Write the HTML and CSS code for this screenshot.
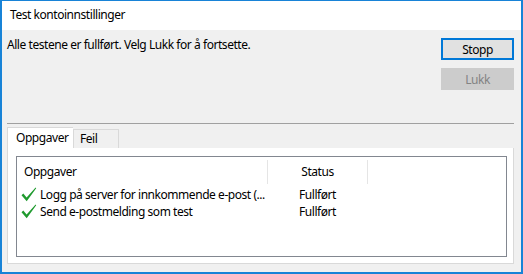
FILE: index.html
```html
<!DOCTYPE html>
<html>
<head>
    <title>Test kontoinnstillinger</title>
    <link rel="stylesheet" href="styles.css">
</head>
<body>
    <div class="window">
        <div class="titlebar">Test kontoinnstillinger</div>

        <div class="content">
            <div class="top-row">
                <div class="message">Alle testene er fullført. Velg Lukk for å fortsette.</div>
                <div class="buttons">
                    <button class="btn btn-default">Stopp</button>
                    <button class="btn btn-disabled" disabled>Lukk</button>
                </div>
            </div>

            <div class="separator"></div>

            <div class="tabs">
                <div class="tab active">Oppgaver</div>
                <div class="tab">Feil</div>
            </div>

            <div class="tab-panel">
                <div class="list">
                    <div class="list-header">
                        <div class="col-task">Oppgaver</div>
                        <div class="col-status">Status</div>
                        <div class="col-rest"></div>
                    </div>
                    <div class="list-row">
                        <div class="col-task">
                            <svg class="check" width="16" height="15" viewBox="0 0 16 15">
                                <path d="M0.5 8.2 L2.3 6.6 L5.6 10.4 L14.6 0.6 L15.2 1.3 L5.7 14.2 Z" fill="#1f9a2e"/>
                            </svg>
                            Logg på server for innkommende e-post (...
                        </div>
                        <div class="col-status">Fullført</div>
                    </div>
                    <div class="list-row">
                        <div class="col-task">
                            <svg class="check" width="16" height="15" viewBox="0 0 16 15">
                                <path d="M0.5 8.2 L2.3 6.6 L5.6 10.4 L14.6 0.6 L15.2 1.3 L5.7 14.2 Z" fill="#1f9a2e"/>
                            </svg>
                            Send e-postmelding som test
                        </div>
                        <div class="col-status">Fullført</div>
                    </div>
                </div>
            </div>
        </div>
    </div>
</body>
</html>
```

FILE: styles.css
```css
html, body {
    margin: 0;
    padding: 0;
}
body {
    font-family: "Noto Sans", "DejaVu Sans", sans-serif;
    font-size: 12px;
    letter-spacing: -0.45px;
    color: #000;
    background: #f0f0f0;
}
.window {
    width: 519px;
    height: 271px;
    border-top: 1px solid #1883d7;
    border-left: 2px solid #1883d7;
    border-right: 2px solid #1883d7;
    border-bottom: 2px solid #1883d7;
    background: #f0f0f0;
    display: flex;
    flex-direction: column;
}
.titlebar {
    height: 29px;
    background: #fff;
    line-height: 28px;
    padding-left: 8px;
}
.content {
    flex: 1;
    padding: 0 7px 0 5px;
    display: flex;
    flex-direction: column;
}
.top-row {
    display: flex;
    justify-content: space-between;
    height: 93px;
}
.message {
    padding-top: 7px;
    line-height: 16px;
}
.buttons {
    display: flex;
    flex-direction: column;
    gap: 8px;
    padding-top: 8px;
}
.btn {
    width: 73px;
    height: 22px;
    font-family: inherit;
    font-size: 12px;
    letter-spacing: inherit;
    padding: 0;
    margin: 0;
    border-radius: 0;
}
.btn-default {
    background: #e1e1e1;
    border: 2px solid #0078d7;
    color: #000;
}
.btn-disabled {
    background: #cccccc;
    border: 1px solid #cccccc;
    color: #838383;
}
.separator {
    height: 1px;
    background: #a0a0a0;
}
.tabs {
    display: flex;
    align-items: flex-end;
    height: 24px;
}
.tab {
    height: 18px;
    line-height: 18px;
    padding: 0 4px 0 6px;
    border: 1px solid #d9d9d9;
    border-bottom: none;
    background: #f0f0f0;
    width: 34px;
}
.tab.active {
    height: 20px;
    line-height: 20px;
    background: #fff;
    width: 57px;
    padding: 0 0 0 8px;
    border-right: none;
}
.tab-panel {
    background: #fff;
    border: 1px solid #d9d9d9;
    border-top: none;
    height: 107px;
    padding: 8px 6px 0 8px;
}
.list {
    border: 1px solid #828790;
    height: 99px;
}
.list-header {
    display: flex;
    height: 24px;
    margin-top: 3px;
    line-height: 24px;
    margin-bottom: 2px;
}
.list-header .col-task {
    width: 243px;
    padding-left: 7px;
    border-right: 1px solid #e5e5e5;
}
.list-header .col-status {
    width: 99px;
    text-align: center;
    border-right: 1px solid #e5e5e5;
}
.list-row {
    display: flex;
    height: 17px;
    line-height: 17px;
}
.list-row .col-task {
    width: 278px;
    padding-left: 4px;
    display: flex;
    align-items: center;
    gap: 3px;
}
.list-row .col-status {
    padding-left: 0;
}
.check {
    flex: none;
}
```
